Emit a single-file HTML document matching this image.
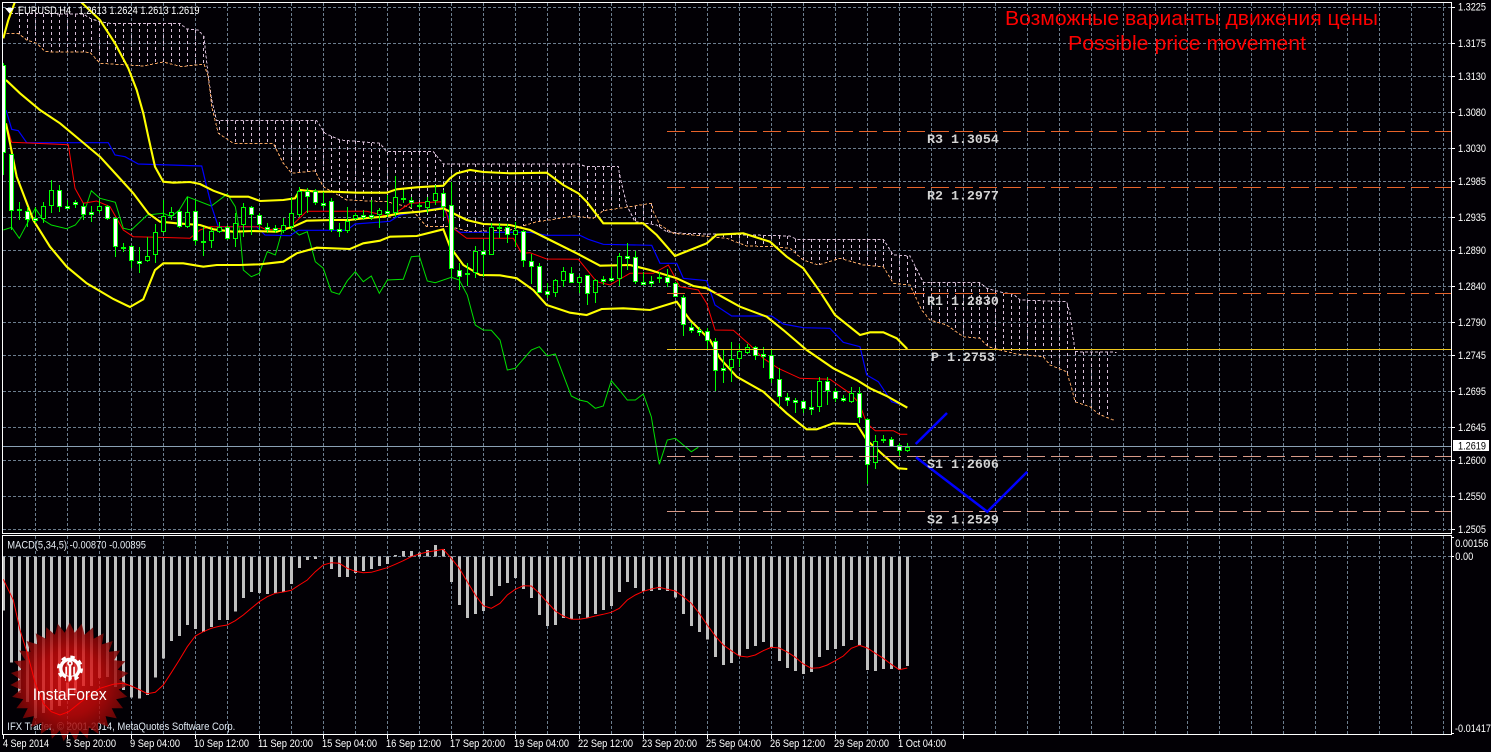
<!DOCTYPE html>
<html>
<head>
<meta charset="utf-8">
<title>EURUSD,H4</title>
<style>
html,body{margin:0;padding:0;background:#020005;width:1491px;height:752px;overflow:hidden}
svg{display:block;position:absolute;left:0;top:0}
text{font-family:"Liberation Sans","Noto Sans CJK SC",sans-serif;font-size:11px;fill:#fff}
.ax text{fill:#fff}
.piv text{font-family:"Liberation Mono",monospace;font-weight:bold;font-size:13.3px;fill:#d4d4d4}
</style>
</head>
<body>
<svg xmlns="http://www.w3.org/2000/svg" width="1491" height="752" viewBox="0 0 1491 752">
<defs>
<radialGradient id="lg" cx="50%" cy="50%" r="50%">
<stop offset="0" stop-color="rgb(240,20,20)" stop-opacity=".8"/>
<stop offset=".55" stop-color="rgb(205,10,10)" stop-opacity=".8"/>
<stop offset="1" stop-color="rgb(115,6,6)" stop-opacity=".85"/>
</radialGradient>
<clipPath id="mainclip"><rect x="3" y="3" width="1448" height="530"/></clipPath>
</defs>
<rect width="1491" height="752" fill="#020005"/>
<g id="grid" stroke="#6c7d8e" stroke-width="1" stroke-dasharray="3 2" shape-rendering="crispEdges" fill="none"></g>
<g clip-path="url(#mainclip)">
<g id="cloud" fill="none" stroke-width="1" shape-rendering="crispEdges"></g>
<g id="lines" fill="none"></g>
<g id="candles" shape-rendering="crispEdges"></g>
</g>
<g id="pivots" fill="none" stroke-width="1" shape-rendering="crispEdges">
<path d="M667 131.5H1451" stroke="#e8632a" stroke-dasharray="18 6"/>
<path d="M667 187.5H1451" stroke="#e8632a" stroke-dasharray="18 6"/>
<path d="M667 293.5H1451" stroke="#e8632a" stroke-dasharray="18 6"/>
<path d="M667 349.5H1451" stroke="#f0c81e"/>
<path d="M667 456.5H1451" stroke="#d99a88" stroke-dasharray="18 6"/>
<path d="M667 511.5H1451" stroke="#d99a88" stroke-dasharray="18 6"/>
<path d="M3 446.5H1451" stroke="#8aa0b4"/>
</g>
<g fill="none" stroke="#0000ff" stroke-width="2.5">
<path d="M915.7 444L947 413"/>
<path d="M916 457.3L987.3 511.7L1027.3 471.7"/>
</g>
<g class="piv">
<text x="927" y="143">R3 1.3054</text>
<text x="927" y="199.500">R2 1.2977</text>
<text x="927" y="305">R1 1.2830</text>
<text x="931" y="361">P 1.2753</text>
<text x="927" y="468">S1 1.2606</text>
<text x="927" y="523.500">S2 1.2529</text>
</g>
<text x="1005" y="25" textLength="373" lengthAdjust="spacingAndGlyphs" style="font-size:20px;fill:#f00">Возможные варианты движения цены</text>
<text x="1068" y="50" textLength="238" lengthAdjust="spacingAndGlyphs" style="font-size:20px;fill:#f00">Possible price movement</text>
<path d="M5 8H14L9.500 13.500Z" fill="#fff"/>
<text x="18" y="14" textLength="53" lengthAdjust="spacingAndGlyphs">EURUSD,H4</text>
<text x="78.500" y="14" textLength="121" lengthAdjust="spacingAndGlyphs">1.2613 1.2624 1.2613 1.2619</text>

<g id="hist" fill="#c0c0c0" shape-rendering="crispEdges"></g>
<text x="7.300" y="730" textLength="228" lengthAdjust="spacingAndGlyphs" style="fill:#dfe8f2">IFX Trader, © 2001-2014, MetaQuotes Software Corp.</text>
<polygon id="star" fill="url(#lg)"/>
<path id="macd" fill="none" stroke="#ff0000" stroke-width="1"/>
<text x="7.300" y="548.500" textLength="138.700" lengthAdjust="spacingAndGlyphs" style="fill:#e8eef5">MACD(5,34,5) -0.00870 -0.00895</text>

<g id="logo">
<circle cx="70" cy="668.500" r="11.800" fill="none" stroke="#fff" stroke-width="2.400" stroke-dasharray="4.500 4.770"/>
<circle cx="70" cy="668.500" r="9.200" fill="none" stroke="#fff" stroke-width="3.400"/>
<path d="M66 676.500h2.500v6h-2.500zM71.800 676.500h2.500v6h-2.500z" fill="#c41010"/>
<circle cx="70" cy="663.300" r="2.800" fill="#fff"/>
<circle cx="70" cy="663.300" r="1.100" fill="#c41010"/>
<rect x="68.900" y="666" width="2.400" height="14.500" fill="#fff"/>
<path d="M65.300 666.700h1.700v8h-1.700zM73.200 666.700h1.700v8h-1.700z" fill="#fff"/>
<text x="32.700" y="700" textLength="74" lengthAdjust="spacingAndGlyphs" style="font-size:17px;fill:#fff">InstaForex</text>
</g>

<g fill="none" stroke="#fff" stroke-width="1" shape-rendering="crispEdges">
<path d="M2.500 2.500H1451.500V533.500H2.500Z"/>
<path d="M2.500 535.500H1451.500V734.500H2.500Z"/>
</g>
<g id="ticks" fill="none" stroke="#fff" stroke-width="1" shape-rendering="crispEdges"></g>
<g class="ax">
<text x="1458" y="10.500" textLength="28" lengthAdjust="spacingAndGlyphs">1.3225</text>
<text x="1458" y="47" textLength="28" lengthAdjust="spacingAndGlyphs">1.3175</text>
<text x="1458" y="80" textLength="28" lengthAdjust="spacingAndGlyphs">1.3130</text>
<text x="1458" y="116" textLength="28" lengthAdjust="spacingAndGlyphs">1.3080</text>
<text x="1458" y="152" textLength="28" lengthAdjust="spacingAndGlyphs">1.3030</text>
<text x="1458" y="185" textLength="28" lengthAdjust="spacingAndGlyphs">1.2985</text>
<text x="1458" y="221" textLength="28" lengthAdjust="spacingAndGlyphs">1.2935</text>
<text x="1458" y="254" textLength="28" lengthAdjust="spacingAndGlyphs">1.2890</text>
<text x="1458" y="290" textLength="28" lengthAdjust="spacingAndGlyphs">1.2840</text>
<text x="1458" y="326" textLength="28" lengthAdjust="spacingAndGlyphs">1.2790</text>
<text x="1458" y="359" textLength="28" lengthAdjust="spacingAndGlyphs">1.2745</text>
<text x="1458" y="395" textLength="28" lengthAdjust="spacingAndGlyphs">1.2695</text>
<text x="1458" y="431" textLength="28" lengthAdjust="spacingAndGlyphs">1.2645</text>
<text x="1458" y="464" textLength="28" lengthAdjust="spacingAndGlyphs">1.2600</text>
<text x="1458" y="500" textLength="28" lengthAdjust="spacingAndGlyphs">1.2550</text>
<text x="1458" y="533" textLength="28" lengthAdjust="spacingAndGlyphs">1.2505</text>
<rect x="1453" y="440" width="36" height="11" fill="#fff"/>
<text x="1458" y="449.500" textLength="28" lengthAdjust="spacingAndGlyphs" style="fill:#000">1.2619</text>
<text x="1455.300" y="547" textLength="33" lengthAdjust="spacingAndGlyphs">0.00156</text>
<text x="1455.300" y="560" textLength="18" lengthAdjust="spacingAndGlyphs">0.00</text>
<text x="1455" y="732" textLength="36" lengthAdjust="spacingAndGlyphs">-0.01417</text>
<text x="3" y="747" textLength="46" lengthAdjust="spacingAndGlyphs">4 Sep 2014</text>
<text x="66" y="747" textLength="50" lengthAdjust="spacingAndGlyphs">5 Sep 20:00</text>
<text x="130" y="747" textLength="50" lengthAdjust="spacingAndGlyphs">9 Sep 04:00</text>
<text x="194" y="747" textLength="55" lengthAdjust="spacingAndGlyphs">10 Sep 12:00</text>
<text x="258" y="747" textLength="55" lengthAdjust="spacingAndGlyphs">11 Sep 20:00</text>
<text x="322" y="747" textLength="55" lengthAdjust="spacingAndGlyphs">15 Sep 04:00</text>
<text x="386" y="747" textLength="55" lengthAdjust="spacingAndGlyphs">16 Sep 12:00</text>
<text x="450" y="747" textLength="55" lengthAdjust="spacingAndGlyphs">17 Sep 20:00</text>
<text x="514" y="747" textLength="55" lengthAdjust="spacingAndGlyphs">19 Sep 04:00</text>
<text x="578" y="747" textLength="55" lengthAdjust="spacingAndGlyphs">22 Sep 12:00</text>
<text x="642" y="747" textLength="55" lengthAdjust="spacingAndGlyphs">23 Sep 20:00</text>
<text x="706" y="747" textLength="55" lengthAdjust="spacingAndGlyphs">25 Sep 04:00</text>
<text x="770" y="747" textLength="55" lengthAdjust="spacingAndGlyphs">26 Sep 12:00</text>
<text x="834" y="747" textLength="55" lengthAdjust="spacingAndGlyphs">29 Sep 20:00</text>
<text x="898" y="747" textLength="48" lengthAdjust="spacingAndGlyphs">1 Oct 04:00</text>
</g>
</svg>
<script>
(function(){
var NS="http://www.w3.org/2000/svg";
function $(i){return document.getElementById(i)}
function add(g,d,attrs){var p=document.createElementNS(NS,"path");p.setAttribute("d",d);for(var k in attrs)p.setAttribute(k,attrs[k]);$(g).appendChild(p)}
// coordinate converters for reading sets
function z1(a){var r=[];for(var i=0;i<a.length;i+=2)r.push([a[i]/3,a[i+1]/3]);return r}
function z2(a){var r=[];for(var i=0;i<a.length;i+=2)r.push([450+a[i]/3,150+a[i+1]/3]);return r}
function z6(a){var r=[];for(var i=0;i<a.length;i+=2)r.push([850+a[i]/3,270+a[i+1]/3]);return r}
function dOf(p){return "M"+p.map(function(q){return q[0].toFixed(1)+" "+q[1].toFixed(1)}).join("L")}
function yAt(p,x){for(var i=1;i<p.length;i++){if(x<=p[i][0]&&x>=p[i-1][0]){var dx=p[i][0]-p[i-1][0];if(dx<=0)return p[i][1];return p[i-1][1]+(p[i][1]-p[i-1][1])*(x-p[i-1][0])/dx}}return null}

// grid
var g="";
[7.5,43.5,76.5,112.5,148.5,181.5,217.5,250.5,286.5,322.5,355.5,391.5,427.5,460.5,496.5,529.5].forEach(function(y){g+="M3 "+y+"H1451"});
g+="M3 556.5H1451";
for(var i=0;i<=44;i++){var x=35.5+32*i;g+="M"+x+" 3V533M"+x+" 536V734"}
add("grid",g,{});

// ticks
var t="";
[7.5,43.5,76.5,112.5,148.5,181.5,217.5,250.5,286.5,322.5,355.5,391.5,427.5,460.5,496.5,529.5].forEach(function(y){t+="M1452 "+y+"H1455"});
t+="M1452 537.5H1454M1452 556.5H1454M1452 733.5H1454";
t+="M3.5 735V739";
for(var j=0;j<15;j++){t+="M"+(67.5+64*j*1)+" 735V"+(j%1==0?739:737)}
add("ticks",t,{});

// cloud
var upper=z1([30,40,250,42,270,55,300,65,330,70,540,70,560,87,595,90,612,110,625,230,635,300,650,362,950,362,975,400,1020,420,1140,430,1160,455,1300,455,1330,492,1499,492])
 .concat(z2([385,42,410,50,505,50,510,80,530,165,555,215,620,225,650,245,700,250,1020,258,1040,268,1300,268,1330,315,1380,318,1420,397,1440,397]))
 .concat(z6([270,38,390,38,410,55,460,68,490,72,510,90,650,95,660,130,675,245,800,247]));
var lower=z1([20,100,55,100,80,120,110,130,135,155,270,157,300,190,430,198,490,186,545,200,612,192,625,230,635,320,655,400,700,430,820,430,850,490,875,520,945,513,970,560,1040,600,1160,605,1230,622,1280,680,1349,680])
 .concat(z2([0,230,60,245,180,240,260,215,300,210,370,198,430,205,460,182,605,160,610,185,630,225,670,250,830,265,890,288,975,290,1020,295,1060,330,1105,345,1170,325,1240,345,1300,350,1330,400,1380,405,1415,480,1440,510,1490,525]))
 .concat(z6([340,200,390,205,415,230,450,240,500,252,580,260,600,285,650,305,665,355,675,395,720,410,745,432,795,452]));
var h="";
for(var k=2;k<=139;k++){var cx=3.5+8*k,a=yAt(upper,cx),b=yAt(lower,cx);if(a==null||b==null)continue;h+="M"+cx+" "+Math.min(a,b).toFixed(0)+"V"+Math.max(a,b).toFixed(0)}
add("cloud",h,{stroke:"#d8bfd8","stroke-dasharray":"3 3"});
add("cloud",dOf(upper),{stroke:"#d8bfd8","stroke-dasharray":"3 2"});
add("cloud",dOf(lower),{stroke:"#f4a460","stroke-dasharray":"3 2"});

// indicators
var chikou=z1([10,690,35,682,58,715,82,670,106,625,130,660,154,675,200,686,226,675,250,645,274,572,300,595,346,607,370,685,394,690,442,645,490,640,514,650,538,630,562,590,634,618,682,582,706,620,720,700,730,810,754,830,778,820,802,755,826,765,850,680,874,685,898,705,922,695,946,785,970,805,994,875,1018,883,1042,842,1066,815,1090,845,1114,828,1138,880,1162,840,1210,838,1234,770,1258,768,1282,843,1306,848,1354,832])
 .concat(z2([28,390,52,435,76,525,100,540,124,541,150,570,172,660,196,655,244,600,268,590,292,618,316,612,364,738,388,750,412,755,436,775,460,768,484,692,508,720,532,750,556,750,580,732,604,800,628,943,652,870,676,865,700,885,724,905,745,892]));
var kijun=z1([18,330,35,388,55,392,80,428,325,428,345,465,375,470,415,492,605,498,620,560,635,620,655,680,770,680,795,705,870,707,895,691,1040,691,1065,672,1170,664,1200,645,1280,630,1330,622,1345,650,1370,690,1349.9,690].slice(0,46))
 .concat(z2([0,230,30,247,240,247,290,256,390,256,415,268,460,283,605,286,630,340,680,340,700,385,770,392,795,465,845,498,965,498,1000,522,1060,533,1140,535,1180,577,1230,590,1250,675,1285,695,1325,755,1372,770]));
var tenkan=z1([18,370,35,427,205,434,225,565,250,610,290,603,330,620,370,690,400,710,470,712,570,715,600,690,630,680,780,680,800,690,870,682,920,634,1100,634,1170,650,1230,610,1330,605])
 .concat(z2([0,228,50,265,190,265,215,310,240,308,290,327,385,328,440,395,480,405,540,370,610,370,655,345,690,410,745,420,770,460,795,540,850,541,900,585,940,625,985,655,1050,685,1140,688,1200,730,1228,760,1250,820,1276,842,1330,842,1350,853,1372,853]));
var bu=z1([10,115,25,60,45,5,60,-30,230,-30,245,8,300,60,345,130,385,205,410,270,430,340,445,410,465,500,490,545,520,548,570,546,600,552,640,572,690,590,745,590,780,603,850,600,885,595,900,570,950,575,1000,575,1070,578,1160,578,1190,568,1250,562,1330,557])
 .concat(z2([0,85,20,70,60,60,100,66,180,70,290,68,340,105,385,130,410,155,460,220,510,220,580,220,620,255,675,318,720,300,770,280,800,254,880,250,960,275,1010,320,1060,355,1110,425,1155,495,1230,555,1260,547,1300,547,1340,565,1372,597]));
var bm=z1([18,240,60,280,120,330,180,370,240,420,300,470,350,525,400,580,445,640,480,665,530,670,600,675,640,688,700,695,760,693,830,695,880,680,920,662,1000,660,1050,660,1090,655,1150,650,1200,640,1260,635,1330,625])
 .concat(z2([0,185,50,210,100,222,180,225,240,240,300,270,380,310,450,347,540,345,600,360,680,385,730,408,770,415,870,470,950,500,1000,540,1070,600,1150,655,1220,690,1260,715,1310,738,1372,773]));
var bl=z1([18,370,50,530,100,660,150,740,200,800,260,850,340,897,390,921,430,898,465,810,490,790,550,790,610,800,650,795,720,795,780,793,850,785,890,760,950,743,1050,747,1090,730,1140,722,1170,710,1250,708,1330,688])
 .concat(z2([0,290,40,345,90,375,150,376,200,385,250,420,290,465,360,488,410,495,455,477,520,475,600,480,680,455,720,510,780,570,810,625,860,680,940,725,1010,790,1070,838,1100,838,1150,820,1220,822,1250,870,1300,915,1345,955,1372,957]));
add("lines",dOf(chikou),{stroke:"#00e000","stroke-width":"1"});
add("lines",dOf(kijun),{stroke:"#0000ff","stroke-width":"1.2"});
add("lines",dOf(tenkan),{stroke:"#ff0000","stroke-width":"1"});
add("lines",dOf(bu),{stroke:"#ffff00","stroke-width":"2.1"});
add("lines",dOf(bm),{stroke:"#ffff00","stroke-width":"2.1"});
add("lines",dOf(bl),{stroke:"#ffff00","stroke-width":"2.1"});

// candles [bodyTop,bodyBot,hi,lo,bull]
var C1=[[195,460,190,525,0],[462,632,462,690,0],[628,634,605,660,0],[632,660,620,680,0],[655,662,620,670,0],[618,658,605,670,1],[570,617,540,640,1],[570,620,555,635,0],[618,620,600,625,0],[606,616,600,625,0],[618,644,610,660,0],[636,640,618,665,0],[618,634,600,640,1],[618,658,615,660,0],[654,742,650,770,0],[742,746,730,755,0],[738,784,735,805,0],[784,786,742,820,0],[768,784,710,785,1],[697,766,672,790,1],[648,696,600,700,1],[636,648,620,660,1],[634,682,630,685,0],[636,680,590,685,1],[634,722,600,735,0],[722,728,680,768,0],[694,724,680,745,1],[682,697,665,700,1],[680,716,675,720,0],[670,718,640,740,1],[622,674,610,710,1],[620,646,618,705,0],[644,676,640,690,0],[680,684,670,700,0],[684,687,675,700,0],[676,694,655,700,1],[640,680,590,690,1],[572,644,560,650,1],[572,590,565,640,0],[572,610,568,615,0],[608,612,575,625,0],[604,690,595,695,0],[686,690,670,712,0],[662,694,620,700,1],[644,658,640,660,1],[644,646,630,660,0],[644,646,600,660,0],[630,646,625,683,1],[632,636,585,650,0],[590,640,527,650,1],[594,600,570,610,0],[600,610,590,625,0],[614,620,610,628,0],[604,624,590,640,1],[580,604,555,615,1],[578,620,570,650,0],[616,808,545,830,0]];
var C2=[[360,380,340,420,0],[370,376,340,408,0],[304,370,288,385,1],[304,314,270,380,0],[232,314,218,316,1],[232,236,218,265,0],[230,256,222,280,0],[240,254,215,290,1],[244,332,240,352,0],[334,352,312,402,0],[348,428,340,430,0],[424,434,400,445,0],[390,428,388,440,1],[364,392,350,410,1],[368,398,352,400,0],[380,398,375,428,1],[376,432,375,465,0],[390,428,388,458,1],[388,390,378,405,0],[385,388,350,395,0],[318,386,308,408,1],[318,320,280,360,0],[322,396,302,402,0],[396,398,365,400,0],[392,394,378,410,0],[382,388,365,400,1],[382,398,358,412,0],[400,440,395,442,0],[440,526,436,558,0],[530,542,520,548,0],[540,542,530,558,0],[542,572,535,598,0],[572,662,565,722,0],[655,658,600,700,0],[628,654,575,695,1],[604,626,582,650,1],[590,608,582,612,1],[592,618,588,630,0],[612,616,590,655,0],[614,686,600,698,0],[688,740,655,770,0],[740,752,730,768,0],[750,752,745,788,0],[754,776,750,788,0],[770,773,720,795,0],[692,770,680,785,1],[692,722,682,765,0],[722,748,715,755,0],[745,752,735,755,0],[730,755,712,758,1],[730,805,712,818,0],[808,944,805,1002,0],[872,940,855,958,1],[866,874,856,880,1],[866,890,862,892,0],[886,904,880,918,0],[890,904,880,906,1]];
var wick="",lime="",white="",black="";
function bar(k,c,oy){
 var cx=3.5+8*k,top=Math.round(oy+c[0]/3),bot=Math.round(oy+c[1]/3),hi=Math.round(oy+c[2]/3),lo=Math.round(oy+c[3]/3);
 if(bot-top<2)bot=top+3;
 wick+="M"+cx+" "+hi+"V"+lo;
 var l=cx-2.5;
 lime+="M"+l+" "+top+"h5V"+bot+"h-5z";
 var inner="M"+(l+1)+" "+(top+1)+"h3V"+(bot-1)+"h-3z";
 if(c[4])black+=inner;else white+=inner;
}
C1.forEach(function(c,i){bar(i,c,0)});
C2.forEach(function(c,i){bar(i+57,c,150)});
add("candles",wick,{stroke:"#00ff00",fill:"none"});
add("candles",lime,{fill:"#00ff00"});
add("candles",white,{fill:"#ffffff"});
add("candles",black,{fill:"#000000"});

// histogram (zoom Y values; zero at 79)
var H=[242,398,489,516,564,549,540,528,501,489,468,468,444,441,471,480,503,506,495,443,385,333,318,285,297,306,291,270,270,245,204,186,189,192,189,186,162,114,90,87,79,117,141,141,129,123,117,108,102,75,63,63,68,60,45,57,156,225,264,252,243,198,168,159,144,177,204,255,288,285,264,267,252,264,252,240,228,186,156,174,183,183,180,183,202,252,288,306,328,381,405,399,378,357,348,336,354,393,414,423,432,426,381,360,357,348,330,345,420,423,417,417,420,408];
var hd="";
H.forEach(function(v,k){if(v==79)return;var x=2+8*k,a=Math.min(v,79),b=Math.max(v,79);var y1=530+a/3,y2=530+b/3;hd+="M"+x+" "+y1.toFixed(1)+"h3V"+y2.toFixed(1)+"h-3z"});
add("hist",hd,{});

// star logo
var pts=[],n=31,cx0=69.7,cy0=682,R=59.5,r=49.5;
for(var s=0;s<n*2;s++){var ang=-Math.PI/2+s*Math.PI/n,rad=s%2?r:R;pts.push((cx0+rad*Math.cos(ang)).toFixed(1)+","+(cy0+rad*Math.sin(ang)).toFixed(1))}
$("star").setAttribute("points",pts.join(" "));

// macd signal
var m1=[10,148,40,210,60,300,82,370,106,460,130,520,154,545,180,555,206,545,250,510,300,475,340,463,370,460,394,468,420,480,442,491,466,487,490,465,514,428,538,390,562,350,586,318,610,305,634,295,658,289,682,285,706,272,730,255,754,235,778,215,802,200,826,190,850,186,874,181,898,165,922,150,946,125,970,105,994,98,1018,100,1042,115,1066,124,1090,128,1114,127,1138,120,1162,113,1186,103,1210,92,1234,80,1258,72,1282,66,1306,62,1330,58,1354,85,1378,115,1402,155,1426,195,1450,227,1474,235];
var m2=[0,220,22,195,46,178,70,167,94,168,118,190,142,217,166,243,190,258,214,268,238,268,262,264,286,258,310,253,334,247,358,235,382,210,406,195,430,184,454,177,478,172,502,178,526,183,550,200,574,220,598,250,622,285,646,318,670,345,694,362,718,378,742,381,766,375,790,362,814,352,838,354,862,366,886,382,910,402,934,415,958,413,982,405,1006,392,1030,378,1054,355,1078,346,1102,354,1126,370,1150,385,1174,403,1198,419,1222,414];
var mp=[];
for(var q=0;q<m1.length;q+=2)mp.push([m1[q]/3,530+m1[q+1]/3]);
for(q=0;q<m2.length;q+=2)mp.push([500+m2[q]/3,530+m2[q+1]/3]);
$("macd").setAttribute("d",dOf(mp));
})();
</script>
</body>
</html>
